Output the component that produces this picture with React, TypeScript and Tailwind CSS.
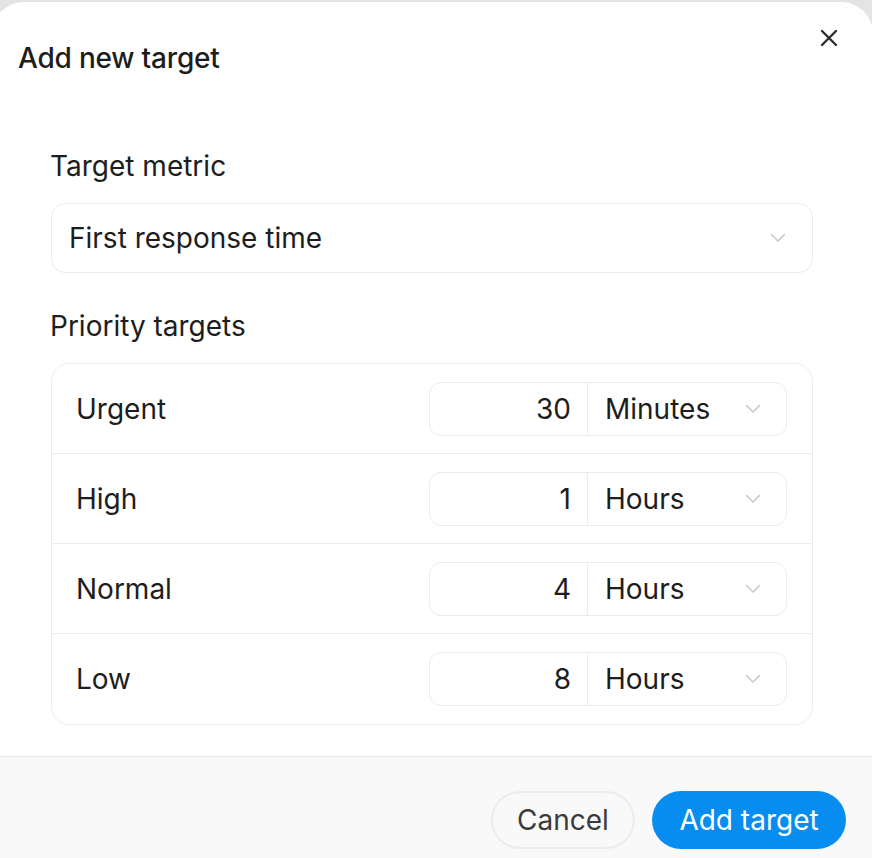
import React from "react";

const rows = [
  { label: "Urgent", value: "30", unit: "Minutes" },
  { label: "High", value: "1", unit: "Hours" },
  { label: "Normal", value: "4", unit: "Hours" },
  { label: "Low", value: "8", unit: "Hours" },
];

function Chevron() {
  return (
    <svg width="16" height="10" viewBox="0 0 16 10" fill="none" className="shrink-0">
      <path d="M1.5 1.5L8 8l6.5-6.5" stroke="#c9c9c9" strokeWidth="1.6" strokeLinecap="round" strokeLinejoin="round" />
    </svg>
  );
}

export default function App() {
  return (
    <div className="min-h-screen bg-[#e4e4e4] pt-[2px] overflow-hidden" style={{ fontFamily: "Inter, 'Noto Sans', sans-serif" }}>
      <div className="ml-[-8px] w-[881px] bg-white rounded-t-[32px] text-[#1d1d1d]">
        {/* header */}
        <div className="flex items-start justify-between pl-[26px] pr-[35px] pt-[40px]">
          <h2 className="text-[28px] leading-[32px] font-[450] tracking-[-0.2px]">Add new target</h2>
          <button className="mt-[-13px] w-[18px] h-[18px] flex items-center justify-center">
            <svg width="18" height="18" viewBox="0 0 18 18" fill="none">
              <path d="M2 2l14 14M16 2L2 16" stroke="#2e2e2e" strokeWidth="2.4" strokeLinecap="round" />
            </svg>
          </button>
        </div>

        {/* body */}
        <div className="pl-[59px] pr-[60px] pt-[76px] pb-[31px]">
          <div className="text-[28px] leading-[32px] ml-[-1px]">Target metric</div>
          <div className="mt-[21px] h-[70px] rounded-[14px] border border-[#ebebeb] flex items-center justify-between pl-[17px] pr-[26px]">
            <span className="text-[28px]">First response time</span>
            <Chevron />
          </div>

          <div className="mt-[37px] text-[28px] leading-[32px] ml-[-1px]">Priority targets</div>
          <div className="mt-[21px] rounded-[18px] border border-[#ebebeb] divide-y divide-[#ebebeb]">
            {rows.map((r) => (
              <div key={r.label} className="h-[90px] flex items-center justify-between pl-[24px] pr-[25px]">
                <span className="text-[28px]">{r.label}</span>
                <div className="flex h-[54px] w-[358px] rounded-[12px] border border-[#ebebeb]">
                  <div className="w-[158px] flex items-center justify-end pr-[16px] border-r border-[#ebebeb] text-[28px]">
                    {r.value}
                  </div>
                  <div className="flex-1 flex items-center justify-between pl-[17px] pr-[25px] text-[28px]">
                    <span>{r.unit}</span>
                    <Chevron />
                  </div>
                </div>
              </div>
            ))}
          </div>
        </div>

        {/* footer */}
        <div className="border-t border-[#ebebeb] bg-[#f9f9f9] flex justify-end gap-[17px] pr-[27px] pt-[34px] pb-[34px]">
          <button className="h-[58px] w-[144px] rounded-full border-2 border-[#ececec] text-[28px] text-[#3b3b3b]">
            Cancel
          </button>
          <button className="h-[58px] w-[194px] rounded-full bg-[#078df0] text-[28px] text-white">
            Add target
          </button>
        </div>
      </div>
    </div>
  );
}
